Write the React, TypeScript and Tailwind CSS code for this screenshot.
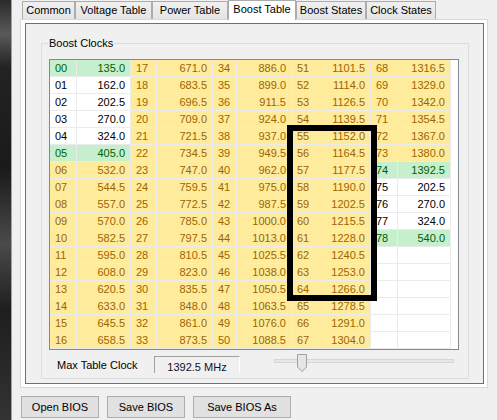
import React from 'react';

type Tone = 'y' | 'g' | 'w' | 'e';

const columns: string[][] = [
  ['135.0', '162.0', '202.5', '270.0', '324.0', '405.0', '532.0', '544.5', '557.0', '570.0', '582.5', '595.0', '608.0', '620.5', '633.0', '645.5', '658.5'],
  ['671.0', '683.5', '696.5', '709.0', '721.5', '734.5', '747.0', '759.5', '772.5', '785.0', '797.5', '810.5', '823.0', '835.5', '848.0', '861.0', '873.5'],
  ['886.0', '899.0', '911.5', '924.0', '937.0', '949.5', '962.0', '975.0', '987.5', '1000.0', '1013.0', '1025.5', '1038.0', '1050.5', '1063.5', '1076.0', '1088.5'],
  ['1101.5', '1114.0', '1126.5', '1139.5', '1152.0', '1164.5', '1177.5', '1190.0', '1202.5', '1215.5', '1228.0', '1240.5', '1253.0', '1266.0', '1278.5', '1291.0', '1304.0'],
  ['1316.5', '1329.0', '1342.0', '1354.5', '1367.0', '1380.0', '1392.5', '202.5', '270.0', '324.0', '540.0'],
];

const toneOf = (col: number, row: number): Tone => {
  if (col === 0) {
    if (row === 0 || row === 5) return 'g';
    if (row < 5) return 'w';
    return 'y';
  }
  if (col === 4) {
    if (row === 6 || row === 10) return 'g';
    if (row >= 7 && row <= 9) return 'w';
    if (row > 10) return 'e';
    return 'y';
  }
  return 'y';
};

const toneClass: Record<Tone, string> = {
  y: 'bg-[#ffeb9c] text-[#9c6500]',
  g: 'bg-[#c6efce] text-[#006100]',
  w: 'bg-white text-black',
  e: 'bg-white',
};

const tabs = [
  { label: 'Common', w: 'w-[53px]' },
  { label: 'Voltage Table', w: 'w-[77px]' },
  { label: 'Power Table', w: 'w-[76px]' },
  { label: 'Boost Table', w: 'w-[68px]', active: true },
  { label: 'Boost States', w: 'w-[70px]' },
  { label: 'Clock States', w: 'w-[70px]' },
];

function BoostGrid() {
  const rows = Array.from({ length: 17 }, (_, r) => r);
  return (
    <div className="ml-[7px] mt-[15px] w-[410px] h-[291px] border border-[#828790] bg-white flex">
      <div className="grid grid-cols-[27px_54px_26px_56px_24px_55px_26px_53px_27px_53px] auto-rows-[17px]">
        {rows.map((r) =>
          columns.map((col, c) => {
            const tone = toneOf(c, r);
            const idx = tone === 'e' ? '' : String(c * 17 + r).padStart(2, '0');
            const val = tone === 'e' ? '' : col[r];
            return (
              <React.Fragment key={`${r}-${c}`}>
                <div className={`border-r border-b border-[#ebebeb] pl-[5px] leading-[16px] ${toneClass[tone]}`}>
                  {idx}
                </div>
                <div className={`border-r border-b border-[#ebebeb] pr-[5px] text-right leading-[16px] ${toneClass[tone]}`}>
                  {val}
                </div>
              </React.Fragment>
            );
          })
        )}
      </div>
    </div>
  );
}

function Slider() {
  return (
    <div className="relative ml-[34px] -mt-[3px] w-[180px] h-[20px]">
      <div className="absolute left-0 right-0 top-[6px] h-[4px] border border-[#d6d6d6] bg-[#e7e7e7]" />
      <svg className="absolute left-[22px] top-0" width="12" height="20" viewBox="0 0 12 20">
        <path d="M1.5 1.5 H10.5 V14 L6 18.5 L1.5 14 Z" fill="#e5e5e5" stroke="#a0a0a0" strokeWidth="1" />
      </svg>
    </div>
  );
}

export default function App() {
  return (
    <div className="relative w-[497px] h-[420px] overflow-hidden bg-[#f0f0f0] flex font-['Liberation_Sans',Arial,sans-serif] text-[11px] text-black">
      {/* background window strip */}
      <div className="w-[11px] h-full bg-[linear-gradient(180deg,#2a2a2a_0%,#5a5a5a_8%,#232323_16%,#1a1a1a_40%,#4a4a4a_58%,#1e1e1e_74%,#333_100%)]" />
      <div className="w-[1px] h-full bg-[#a0a0a0]" />

      <div className="flex-1 flex flex-col pl-[8px]">
        {/* Tabs */}
        <div className="h-[19px] flex items-end pl-[2px]">
          {tabs.map((t) =>
            t.active ? (
              <div
                key={t.label}
                className={`${t.w} h-[20px] -mb-[1px] relative z-10 bg-white border border-b-0 border-[#acacac] flex justify-center pt-[2px] leading-[13px]`}
              >
                {t.label}
              </div>
            ) : (
              <div
                key={t.label}
                className={`${t.w} h-[18px] bg-[linear-gradient(180deg,#f0f0f0,#e5e5e5)] border border-b-0 border-[#acacac] flex items-center justify-center leading-[13px]`}
              >
                {t.label}
              </div>
            )
          )}
        </div>

        {/* Tab page */}
        <div className="w-[468px] h-[369px] border border-[#d9d9d9] bg-white pl-[4px] pr-[3px] py-[3px] flex">
          <div className="flex-1 border border-[#707070] bg-[#f0f0f0]">
            <div className="relative ml-[15px] mt-[19px] w-[428px] h-[336px] border border-[#dcdcdc] flex flex-col">
              <span className="absolute -top-[8px] left-[6px] px-[1px] bg-[#f0f0f0] leading-[14px]">Boost Clocks</span>
              <BoostGrid />

              <div className="flex items-start mt-[6px] h-[17px]">
                <span className="ml-[15px] w-[97px] pt-[3px] leading-[13px]">Max Table Clock</span>
                <div className="w-[86px] h-[17px] border-t border-l border-r border-t-[#a0a0a0] border-l-[#a0a0a0] border-r-white bg-[#f0f0f0] flex justify-center pt-[4px] leading-[13px] text-[#10102a]">
                  1392.5 MHz
                </div>
                <Slider />
              </div>
            </div>
          </div>
        </div>

        {/* Buttons */}
        <div className="flex gap-[8px] ml-[1px] mt-[8px]">
          <button className="w-[78px] h-[22px] border border-[#adadad] bg-[#e1e1e1] leading-[13px]">Open BIOS</button>
          <button className="w-[78px] h-[22px] border border-[#adadad] bg-[#e1e1e1] leading-[13px]">Save BIOS</button>
          <button className="w-[98px] h-[22px] border border-[#adadad] bg-[#e1e1e1] leading-[13px]">Save BIOS As</button>
        </div>
      </div>

      {/* highlight frame drawn over the grid */}
      <div className="absolute left-[287px] top-[125px] w-[90px] h-[176px] border-[6px] border-black pointer-events-none" />
    </div>
  );
}
